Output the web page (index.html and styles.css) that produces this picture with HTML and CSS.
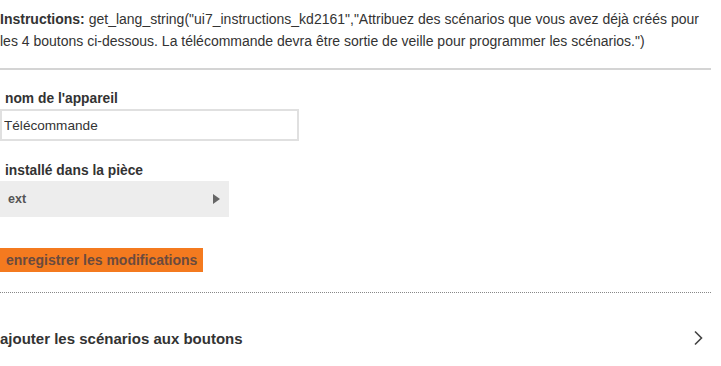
FILE: index.html
```html
<!DOCTYPE html>
<html lang="fr">
<head>
  <meta charset="UTF-8">
  <title>Télécommande</title>
  <link rel="stylesheet" href="styles.css">
</head>
<body>

  <!-- Instructions -->
  <div class="instructions">
    <p><strong>Instructions:</strong> get_lang_string("ui7_instructions_kd2161","Attribuez des scénarios que vous avez déjà créés pour les 4 boutons ci-dessous. La télécommande devra être sortie de veille pour programmer les scénarios.")</p>
  </div>

  <!-- Device settings -->
  <div class="settings">
    <label class="field-label" for="devname">nom de l'appareil</label>
    <input type="text" id="devname" class="text-input" value="Télécommande">

    <label class="field-label">installé dans la pièce</label>
    <div class="select-box">
      <span>ext</span>
      <span class="select-arrow"></span>
    </div>

    <span class="btn-save">enregistrer les modifications</span>
  </div>

  <!-- Scenes link -->
  <div class="scenes-row">
    <span>ajouter les scénarios aux boutons</span>
    <svg class="chevron" width="10" height="16" viewBox="0 0 10 16">
      <path d="M2 1.5 L8.5 8 L2 14.5" fill="none" stroke="#444" stroke-width="1.6"/>
    </svg>
  </div>

</body>
</html>
```

FILE: styles.css
```css
body {
  margin: 0;
  font-family: "Liberation Sans", Arial, sans-serif;
  font-size: 13px;
  color: #333;
  background-color: #fff;
}

.instructions {
  width: 711px;
  padding: 8px 0 16px 0;
  border-bottom: 2px solid #d4d4d4;
}

.instructions p {
  width: 708px;
  margin: 0;
  line-height: 22px;
  font-size: 14px;
  color: #333;
}

.settings {
  width: 711px;
  padding-top: 21px;
  padding-bottom: 20px;
  border-bottom: 1px dotted #888;
}

.field-label {
  display: block;
  height: 16px;
  line-height: 16px;
  font-weight: bold;
  font-size: 13.8px;
  padding-left: 5px;
  margin-bottom: 2px;
}

.text-input {
  display: block;
  box-sizing: border-box;
  width: 299px;
  height: 32px;
  margin: 0 0 22px 0;
  padding: 0 2px;
  border: 2px solid #e0e0e0;
  font-family: "Liberation Sans", Arial, sans-serif;
  font-size: 13.6px;
  color: #333;
  outline: none;
}

.select-box {
  display: flex;
  align-items: center;
  justify-content: space-between;
  box-sizing: border-box;
  width: 229px;
  height: 36px;
  margin-top: 1px;
  padding: 0 9px 0 8px;
  background-color: #ededed;
  font-weight: bold;
  font-size: 12.5px;
  color: #555;
  margin-bottom: 31px;
}

.select-arrow {
  width: 0;
  height: 0;
  border-top: 5px solid transparent;
  border-bottom: 5px solid transparent;
  border-left: 7px solid #666;
}

.btn-save {
  display: block;
  width: fit-content;
  height: 24px;
  line-height: 24px;
  padding: 0 6px;
  background-color: #f47a1f;
  color: #6a4a3e;
  font-weight: bold;
  font-size: 14px;
}

.scenes-row {
  width: 711px;
  display: flex;
  align-items: center;
  justify-content: space-between;
  margin-top: 36px;
  height: 18px;
  font-weight: bold;
  font-size: 15px;
  color: #333;
}

.chevron {
  margin-right: 8px;
}
```
